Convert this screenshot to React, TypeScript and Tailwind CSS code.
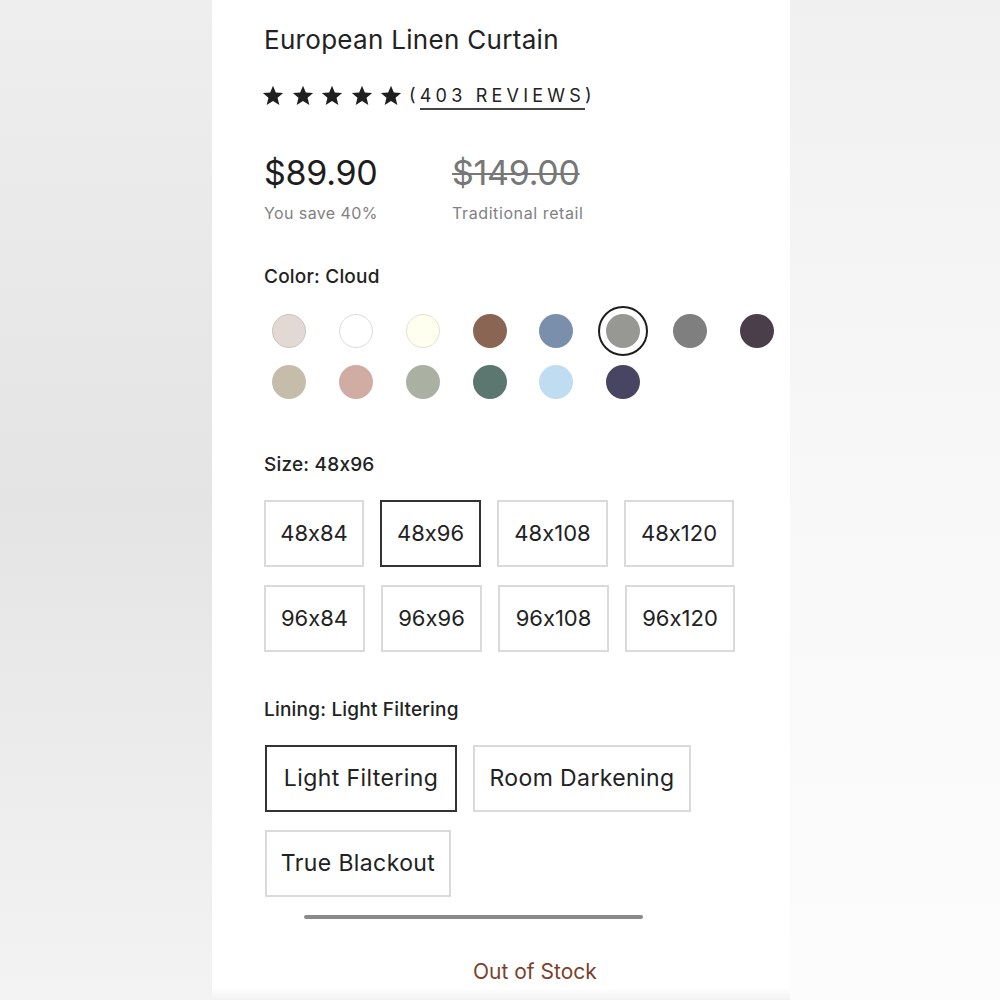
import React from 'react';

const FONT = { fontFamily: 'Inter, "Liberation Sans", sans-serif' };

const swatches = [
  { color: 'bg-[#e2d9d5]', ring: 'border border-[#cdc3bf]' },
  { color: 'bg-[#ffffff]', ring: 'border border-[#dcdcdc]' },
  { color: 'bg-[#fffff0]', ring: 'border border-[#e4e2cf]' },
  { color: 'bg-[#8a6553]', ring: '' },
  { color: 'bg-[#7a8fab]', ring: '' },
  { color: 'bg-[#979794]', ring: '', selected: true },
  { color: 'bg-[#7f7f7f]', ring: '' },
  { color: 'bg-[#4a3e4a]', ring: '' },
  { color: 'bg-[#c6bcaa]', ring: '' },
  { color: 'bg-[#d0aca2]', ring: '' },
  { color: 'bg-[#abb1a2]', ring: '' },
  { color: 'bg-[#5c776f]', ring: '' },
  { color: 'bg-[#c0dcf1]', ring: '' },
  { color: 'bg-[#484562]', ring: '' },
];

const sizes = [
  { label: '48x84', w: 'w-[100px]' },
  { label: '48x96', w: 'w-[101px]', selected: true },
  { label: '48x108', w: 'w-[111px]' },
  { label: '48x120', w: 'w-[110px]' },
  { label: '96x84', w: 'w-[101px]' },
  { label: '96x96', w: 'w-[101px]' },
  { label: '96x108', w: 'w-[111px]' },
  { label: '96x120', w: 'w-[110px]' },
];

const linings = [
  { label: 'Light Filtering', w: 'w-[192px]', selected: true },
  { label: 'Room Darkening', w: 'w-[218px]' },
  { label: 'True Blackout', w: 'w-[186px]' },
];

function Star() {
  return (
    <svg width="22" height="21" viewBox="0 0 24 23" className="shrink-0">
      <path
        d="M12 0.8l3.1 7.4 8 .6-6.1 5.2 1.9 7.8L12 17.6l-6.9 4.2 1.9-7.8L.9 8.8l8-.6z"
        fill="#1f1f1f"
      />
    </svg>
  );
}

function OptionBox({ label, w, selected, text }: { label: string; w: string; selected?: boolean; text: string }) {
  return (
    <div
      className={
        'h-[67px] flex items-center justify-center border-2 text-[#222] ' +
        text +
        ' ' +
        w +
        (selected ? ' border-[#333]' : ' border-[#dadada]')
      }
    >
      {label}
    </div>
  );
}

export default function App() {
  return (
    <div className="w-[1000px] h-[1000px] flex overflow-hidden [font-feature-settings:'calt'_0]" style={FONT}>
      {/* blurred backdrop, left */}
      <div className="w-[212px] h-full bg-linear-to-b from-[#eeeeee] via-[#e4e4e4] to-[#f3f3f3]" />

      {/* product panel */}
      <div className="w-[578px] h-full bg-white pl-[52px] pr-[16px] pt-[24px] flex flex-col relative">
        <h1 className="text-[26px] leading-[32px] text-[#222] tracking-[0.3px]">European Linen Curtain</h1>

        {/* rating */}
        <div className="mt-[27px] h-[24px] flex items-center">
          <div className="flex items-center gap-[7.5px] -ml-[2px]">
            <Star />
            <Star />
            <Star />
            <Star />
            <Star />
          </div>
          <div className="ml-[7px] flex items-center text-[18px] leading-[24px] text-[#222] tracking-[4.2px]">
            <span>(</span>
            <span className="border-b-2 border-[#444] leading-[22px] translate-y-[2px] pb-[1px] -mr-[4px]">403 REVIEWS</span>
            <span className="ml-[4px]">)</span>
          </div>
        </div>

        {/* price */}
        <div className="mt-[46px] flex">
          <div className="w-[188px]">
            <div className="text-[34px] leading-[40px] text-[#1d1d1d] tracking-[-0.3px]">$89.90</div>
            <div className="mt-[10px] text-[16px] leading-[20px] text-[#818181] tracking-[0.4px]">You save 40%</div>
          </div>
          <div>
            <div className="text-[34px] leading-[40px] text-[#777] tracking-[-0.3px] line-through decoration-2">$149.00</div>
            <div className="mt-[10px] text-[16px] leading-[20px] text-[#818181] tracking-[0.6px]">Traditional retail</div>
          </div>
        </div>

        {/* color */}
        <div className="mt-[42px] text-[19px] leading-[24px] font-medium text-[#222] tracking-[0.2px]">Color: Cloud</div>
        <div className="mt-[17px] grid grid-cols-[repeat(8,50px)] gap-x-[16.85px] gap-y-[1px]">
          {swatches.map((s, i) => (
            <div
              key={i}
              className={
                'w-[50px] h-[50px] rounded-full flex items-center justify-center' +
                (s.selected ? ' border-2 border-[#1e1e1e]' : '')
              }
            >
              <div className={'w-[34px] h-[34px] rounded-full ' + s.color + ' ' + s.ring} />
            </div>
          ))}
        </div>

        {/* size */}
        <div className="mt-[46px] text-[19px] leading-[24px] font-medium text-[#222] tracking-[0.2px]">Size: 48x96</div>
        <div className="mt-[23px] flex flex-wrap gap-x-[16px] gap-y-[18px] w-[490px]">
          {sizes.map((s) => (
            <OptionBox key={s.label} {...s} text="text-[22px]" />
          ))}
        </div>

        {/* lining */}
        <div className="mt-[46px] text-[19px] leading-[24px] font-medium text-[#222] tracking-[0.2px]">Lining: Light Filtering</div>
        <div className="mt-[23px] flex flex-wrap gap-x-[16px] gap-y-[18px] w-[470px] pl-[1px]">
          {linings.map((l) => (
            <OptionBox key={l.label} {...l} text="text-[23px] tracking-[0.4px]" />
          ))}
        </div>

        {/* scroll indicator */}
        <div className="mt-[18px] ml-[40px] w-[339px] h-[4px] rounded-full bg-[#8a8a8a]" />

        {/* status */}
        <div className="mt-[39px] ml-[209px] text-[21px] leading-[28px] text-[#7b3f2b]">Out of Stock</div>

        <div className="absolute left-0 right-0 bottom-0 h-[12px] bg-linear-to-b from-white to-[#f2f2f2]" />
      </div>

      {/* blurred backdrop, right */}
      <div className="flex-1 h-full bg-linear-to-b from-[#f0f0f0] via-[#f8f8f8] to-[#fcfcfc]" />
    </div>
  );
}
